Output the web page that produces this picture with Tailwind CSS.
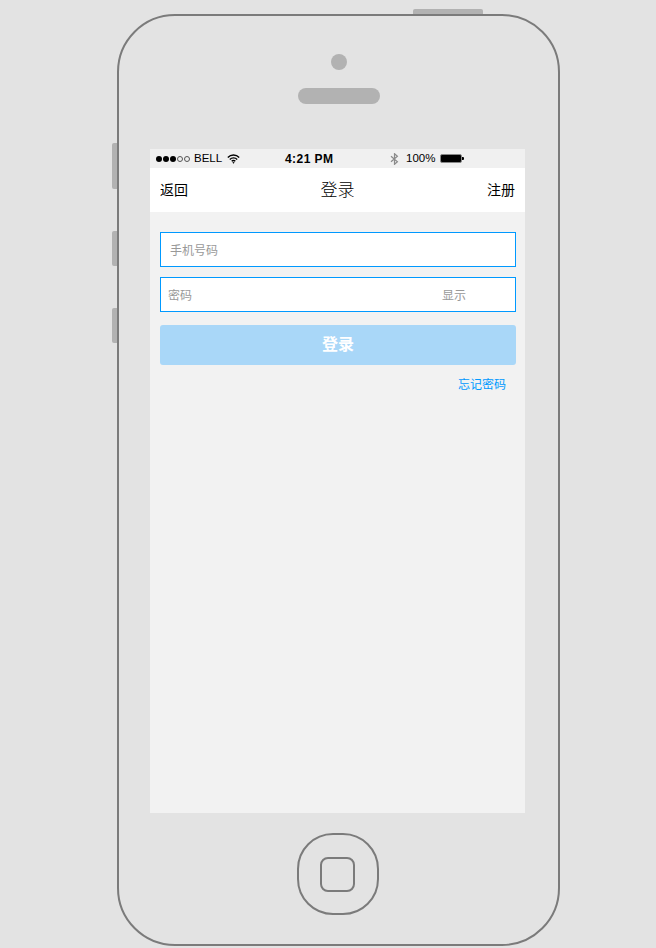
<!doctype html>
<html lang="zh">
<head>
<meta charset="utf-8">
<script src="https://cdn.jsdelivr.net/npm/@tailwindcss/browser@4"></script>
</head>
<body class="m-0 h-[948px] w-[656px] overflow-hidden bg-[#e3e3e3] font-['Liberation_Sans','Noto_Sans_CJK_SC',sans-serif]">
<div class="relative ml-[117px] mt-[14px] inline-block h-[932px] w-[443px] rounded-[58px] border-2 border-[#7b7b7b] align-top">
  <div class="absolute left-[294px] top-[-7px] h-[5px] w-[70px] rounded-t-[2px] bg-[#b2b2b2]"></div>
  <div class="absolute left-[-7px] top-[127px] h-[46px] w-[5px] rounded-l-[2px] bg-[#b2b2b2]"></div>
  <div class="absolute left-[-7px] top-[215px] h-[35px] w-[5px] rounded-l-[2px] bg-[#b2b2b2]"></div>
  <div class="absolute left-[-7px] top-[292px] h-[35px] w-[5px] rounded-l-[2px] bg-[#b2b2b2]"></div>

  <div class="flex flex-col items-center pl-[1px] pt-[38px]">
    <div class="h-4 w-4 rounded-full bg-[#b2b2b2]"></div>
    <div class="mt-[18px] h-4 w-[82px] rounded-full bg-[#b2b2b2]"></div>
  </div>

  <div class="ml-[31px] mt-[45px] h-[664px] w-[375px] bg-[#f2f2f2]">
    <div class="flex h-[19px] items-center bg-[#f0f0f0] pl-[6px] text-[11.5px] leading-none text-black">
      <div class="flex w-[38px] items-center gap-[1px]">
        <span class="h-[6px] w-[6px] rounded-full bg-black"></span>
        <span class="h-[6px] w-[6px] rounded-full bg-black"></span>
        <span class="h-[6px] w-[6px] rounded-full bg-black"></span>
        <span class="h-[6px] w-[6px] rounded-full border border-[#555]"></span>
        <span class="h-[6px] w-[6px] rounded-full border border-[#555]"></span>
      </div>
      <span class="w-[33px]">BELL</span>
      <svg class="h-[10px] w-[13px]" viewBox="0 0 13 10" fill="none" stroke="#000" stroke-width="1.4">
        <path d="M.8 3.4a8 8 0 0 1 11.4 0"/>
        <path d="M2.8 5.4a5.2 5.2 0 0 1 7.4 0"/>
        <path d="M4.7 7.3a2.5 2.5 0 0 1 3.6 0"/>
        <path d="M6.5 9.8 5.4 8.5a1.5 1.5 0 0 1 2.2 0z" fill="#000" stroke="none"/>
      </svg>
      <span class="ml-[45px] w-[105px] text-[12px] font-bold tracking-[0.45px]">4:21 PM</span>
      <svg class="h-[12px] w-[9px]" viewBox="0 0 9 12" fill="none" stroke="#8a8a8a" stroke-width="1.2">
        <path d="M1 3.2 7.4 8.8 4.5 11.3V.7L7.4 3.2 1 8.8"/>
      </svg>
      <span class="ml-[7px] w-[34px]">100%</span>
      <div class="flex items-center">
        <div class="h-[9px] w-[22px] rounded-[2px] border border-[#888] bg-black"></div>
        <div class="h-[3px] w-[2px] rounded-r-[1px] bg-black"></div>
      </div>
    </div>

    <div class="flex h-[44px] items-center justify-between bg-white px-[10px] text-black">
      <span class="text-[14px]">返回</span>
      <span class="pt-[2px] text-[17px] font-light">登录</span>
      <span class="text-[14px]">注册</span>
    </div>

    <div class="flex w-[366px] flex-col pl-[10px] pt-[20px]">
      <div class="flex h-[35px] items-center border border-[#0099ff] bg-white pl-[9px] pt-[2px] text-[12px] text-[#999]">手机号码</div>
      <div class="mt-[10px] flex h-[35px] items-center justify-between border border-[#0099ff] bg-white pl-[7px] pr-[49px] pt-[2px] text-[12px] text-[#999]">
        <span>密码</span>
        <span>显示</span>
      </div>
      <button class="mt-[13px] h-[40px] rounded-[3px] bg-[#a9d7f8] text-[16px] font-bold text-white">登录</button>
      <div class="mt-[11px] pr-[10px] text-right text-[12px] leading-[18px] text-[#0099ff]">忘记密码</div>
    </div>
  </div>

  <div class="ml-[178px] mt-[20px] flex h-[82px] w-[82px] items-center justify-center rounded-[36px] border-2 border-[#7b7b7b]">
    <div class="mr-[1px] h-[35px] w-[35px] rounded-[8px] border-2 border-[#7b7b7b]"></div>
  </div>
</div>
</body>
</html>
